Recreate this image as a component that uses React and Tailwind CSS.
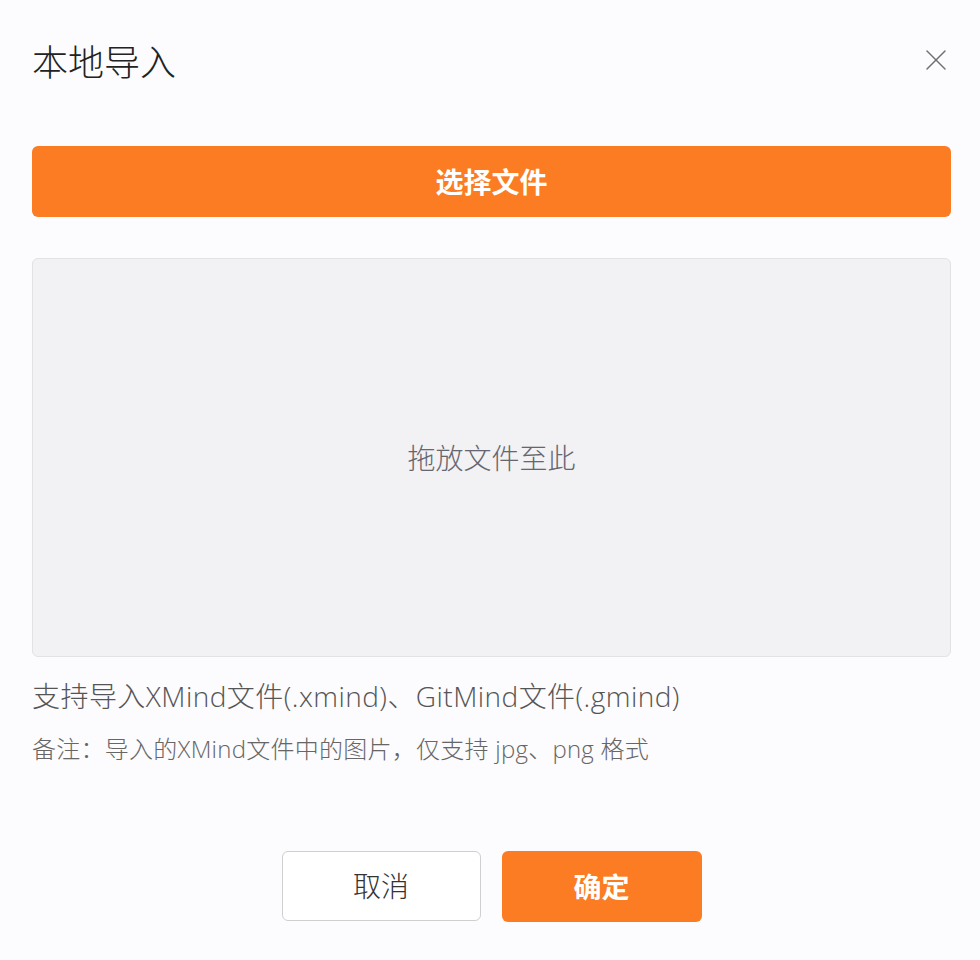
import { X } from 'lucide-react';

export default function App() {
  return (
    <div
      className="min-h-[960px] w-[980px] bg-[#fcfbfd]"
      style={{ fontFamily: '"Noto Sans", "Noto Sans CJK SC", sans-serif' }}
    >
      <div className="ml-[32px] w-[919px] pt-[38px]">
        {/* Header */}
        <div className="flex h-[50px] items-center justify-between">
          <h1 className="text-[36px] font-light leading-[50px] text-[#222]">本地导入</h1>
          <button className="-mr-[3px] -mt-[6px] text-[#707070]">
            <X className="h-[36px] w-[36px]" strokeWidth={1} />
          </button>
        </div>

        {/* Choose file */}
        <button className="mt-[58px] flex h-[71px] w-full items-center justify-center rounded-[6px] bg-[#fb7c23] text-[28px] font-bold text-white">
          选择文件
        </button>

        {/* Drop zone */}
        <div className="mt-[41px] flex h-[399px] w-full items-center justify-center rounded-[6px] border border-[#e2e1e4] bg-[#f2f1f3]">
          <span className="text-[28px] font-light text-[#666670]">拖放文件至此</span>
        </div>

        {/* Notes */}
        <div style={{ fontFamily: '"Open Sans", "Noto Sans CJK SC", sans-serif' }}>
          <p className="mt-[21px] text-[28px] font-light leading-[36px] tracking-[0.45px] text-[#555]">
            支持导入XMind文件(.xmind)、GitMind文件(.gmind)
          </p>
          <p className="mt-[19px] text-[24px] font-light leading-[32px] tracking-[0.25px] text-[#666]">
            备注：导入的XMind文件中的图片，仅支持 jpg、png 格式
          </p>
        </div>

        {/* Footer */}
        <div className="mt-[86px] flex justify-center gap-[21px]">
          <button className="h-[70px] w-[199px] rounded-[6px] border border-[#cfcfd2] bg-white text-[28px] font-light text-[#333]">
            取消
          </button>
          <button className="h-[71px] w-[200px] rounded-[6px] bg-[#fb7c23] text-[28px] font-bold text-white">
            确定
          </button>
        </div>
      </div>
    </div>
  );
}
